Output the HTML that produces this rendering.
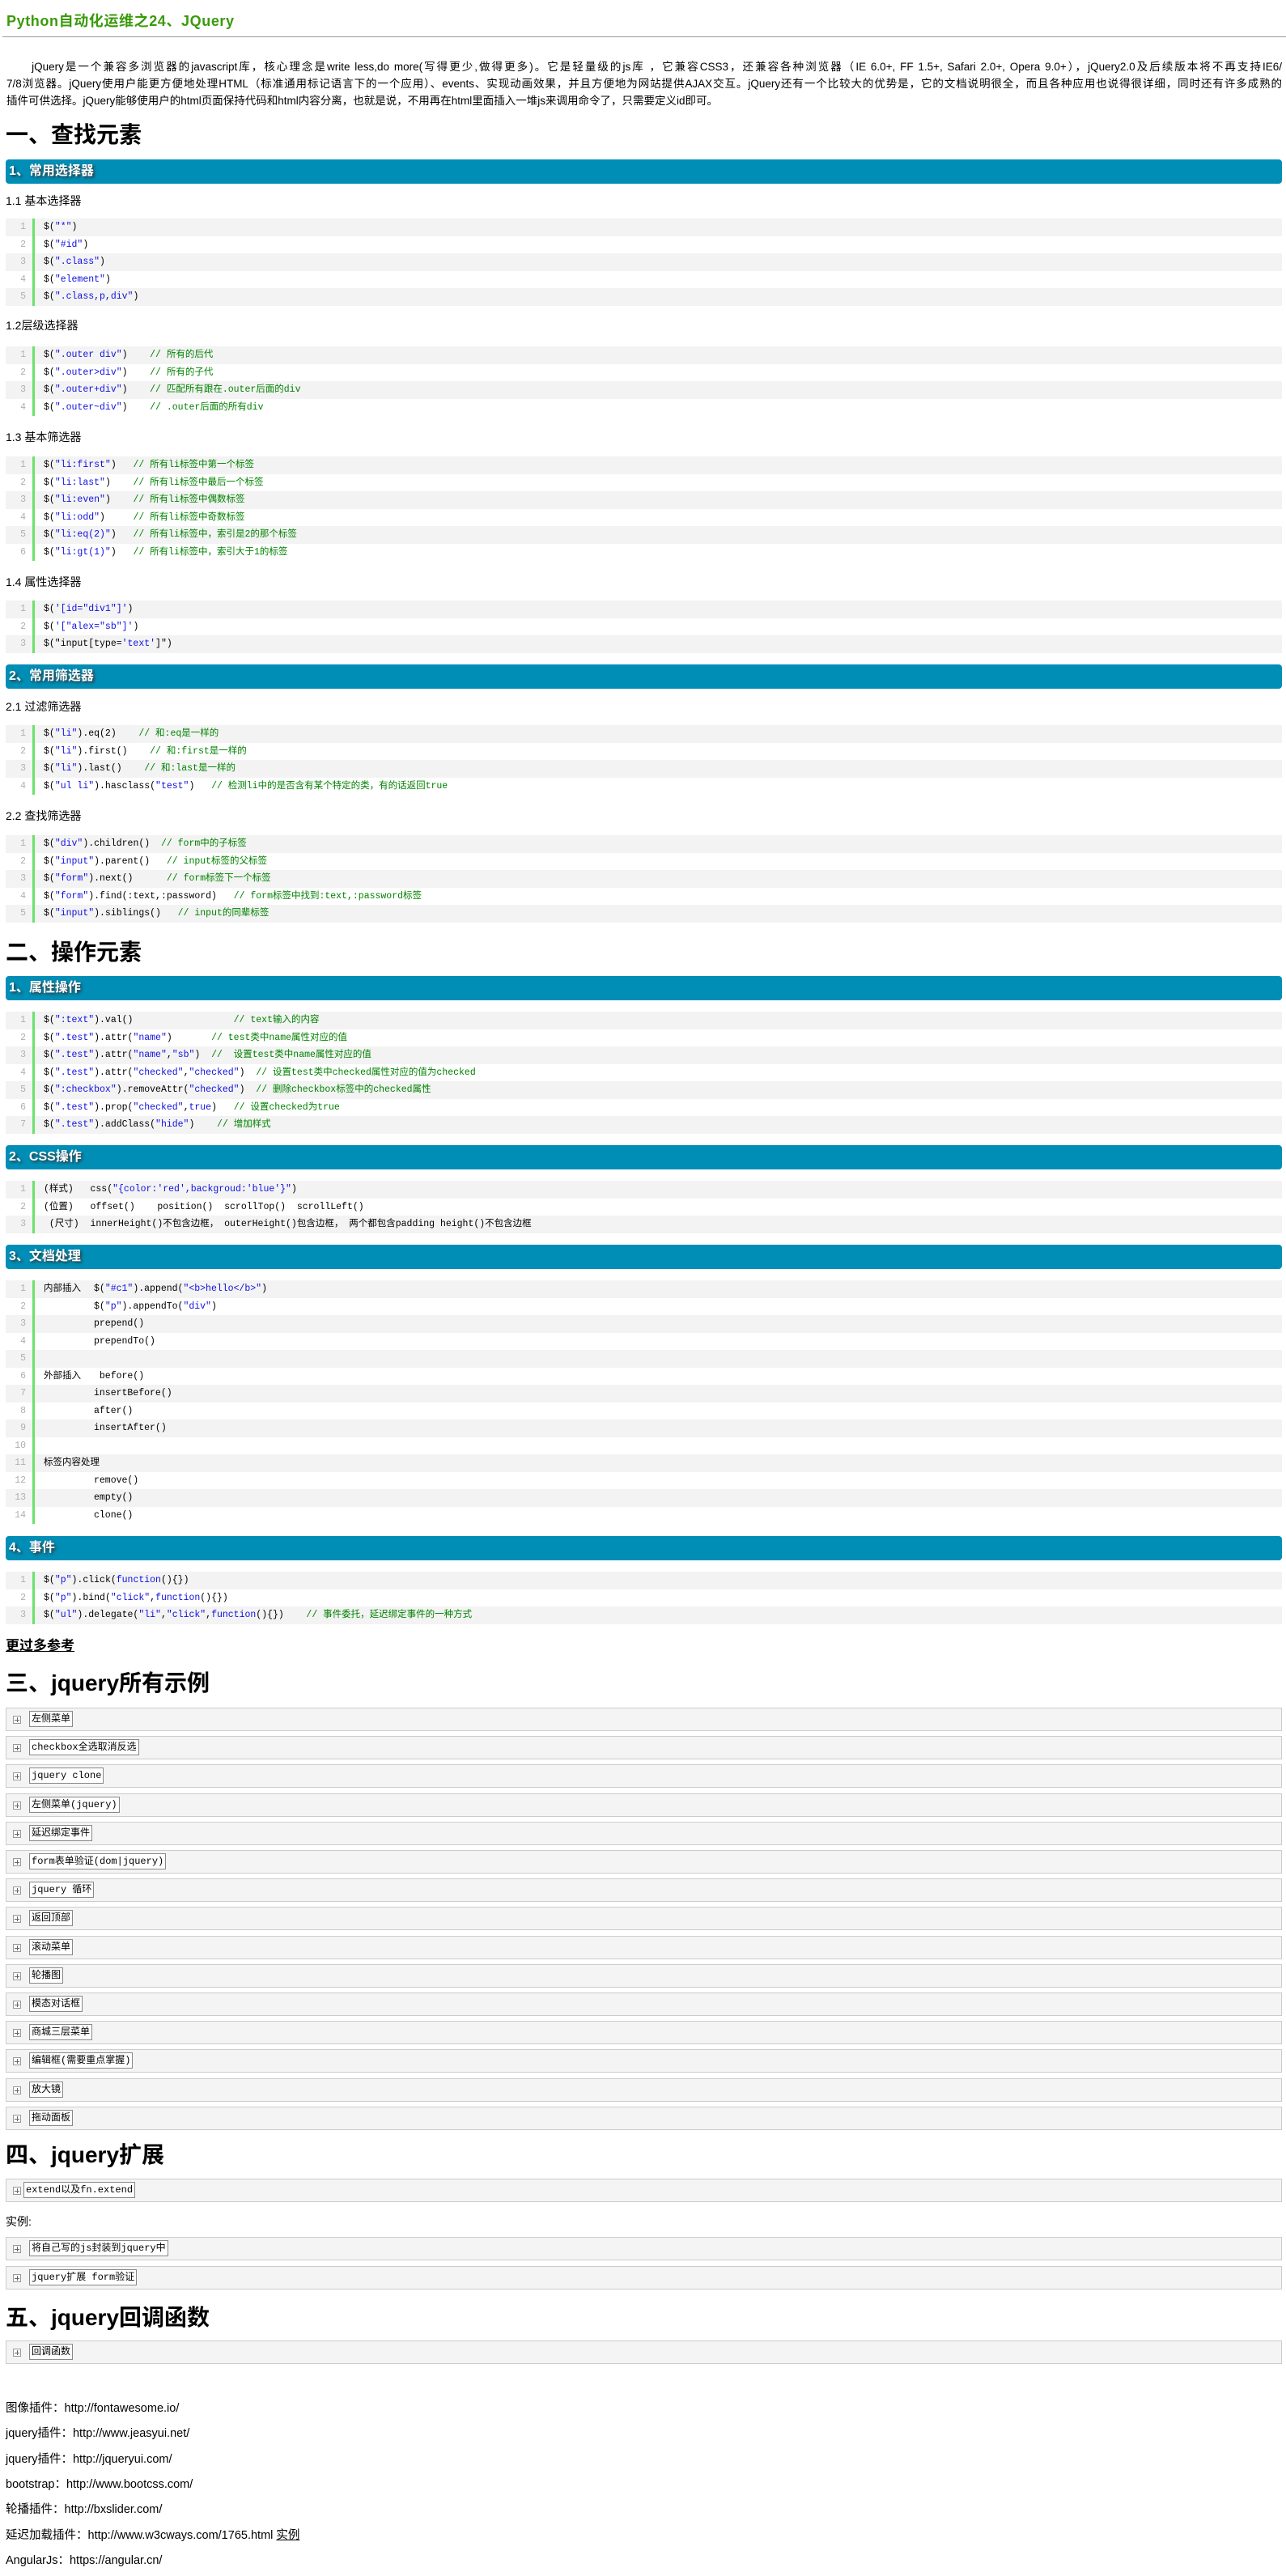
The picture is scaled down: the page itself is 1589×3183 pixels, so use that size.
<!DOCTYPE html>
<html><head><meta charset="utf-8">
<style>
*{margin:0;padding:0;box-sizing:border-box}
html,body{width:1589px;height:3183px;background:#fff;overflow:hidden}
body{position:relative;font-family:"Liberation Sans","Noto Sans CJK SC",sans-serif;color:#000}
.a{position:absolute}
.title{left:8px;top:14px;font-size:18px;font-weight:bold;color:#3a9a0a;letter-spacing:0.6px;line-height:24px}
.rule{left:3px;right:0;top:45px;height:1px;background:#999}
.p{left:8px;width:1576px;top:72px;font-size:13.5px;line-height:21px}
.p div{text-align:justify;text-align-last:justify;white-space:nowrap;overflow:visible}
.p div.l{text-align-last:left}
.h1{left:7px;font-size:28px;font-weight:bold;line-height:34px}
.bar{left:7px;right:5px;height:30px;background:#008eb6;border-radius:4px;color:#fff;font-weight:bold;font-size:16px;line-height:30px;padding-left:4px;text-shadow:2px 2px 3px #333}
.lab{left:7px;font-size:14px;line-height:20px}
.code{left:7px;right:5px;font:11.5px/21.5px "Liberation Mono","Noto Sans CJK SC",monospace}
.code .g{position:absolute;left:33px;top:0;bottom:0;width:3px;background:#6ce26c}
.row{height:21.5px;display:flex;white-space:pre}
.row:nth-child(even){background:#f3f3f3}
.n{width:25px;text-align:right;color:#afafaf}
.t{padding-left:22px}
.s{color:#1010e0}
.c{color:#008200}
.k{display:inline-block;width:62px}
.box{left:7px;right:5px;height:29px;background:#f4f4f4;border:1.5px solid #ccc}
.pl{position:absolute;left:8px;top:9px;width:10px;height:10px;border:1px solid #999;background:#fff}
.pl:before{content:"";position:absolute;left:1px;top:3.5px;width:6px;height:1px;background:#666}
.pl:after{content:"";position:absolute;left:3.5px;top:1px;width:1px;height:6px;background:#666}
.bl{position:absolute;left:28px;top:3px;height:20px;border:1px solid #888;background:#fff;font:12px/18px "Liberation Mono","Noto Sans CJK SC",monospace;padding:0 2px;white-space:pre}
.lk{left:7px;font-size:14.5px;line-height:20px}
</style></head><body>
<div class="a title">Python自动化运维之24、JQuery</div>
<div class="a rule"></div>
<div class="a p">
<div>　　jQuery是一个兼容多浏览器的javascript库，核心理念是write less,do more(写得更少,做得更多)。它是轻量级的js库 ，它兼容CSS3，还兼容各种浏览器（IE 6.0+, FF 1.5+, Safari 2.0+, Opera 9.0+），jQuery2.0及后续版本将不再支持IE6/</div>
<div>7/8浏览器。jQuery使用户能更方便地处理HTML（标准通用标记语言下的一个应用）、events、实现动画效果，并且方便地为网站提供AJAX交互。jQuery还有一个比较大的优势是，它的文档说明很全，而且各种应用也说得很详细，同时还有许多成熟的</div>
<div class="l">插件可供选择。jQuery能够使用户的html页面保持代码和html内容分离，也就是说，不用再在html里面插入一堆js来调用命令了，只需要定义id即可。</div>
</div>

<div class="a h1" style="top:150px">一、查找元素</div>
<div class="a bar" style="top:197px">1、常用选择器</div>
<div class="a lab" style="top:238px">1.1 基本选择器</div>
<div class="a code" style="top:270px"><div class="g"></div>
<div class="row"><span class="n">1</span><span class="t">$(<span class="s">"*"</span>)</span></div>
<div class="row"><span class="n">2</span><span class="t">$(<span class="s">"#id"</span>)</span></div>
<div class="row"><span class="n">3</span><span class="t">$(<span class="s">".class"</span>)</span></div>
<div class="row"><span class="n">4</span><span class="t">$(<span class="s">"element"</span>)</span></div>
<div class="row"><span class="n">5</span><span class="t">$(<span class="s">".class,p,div"</span>)</span></div>
</div>
<div class="a lab" style="top:392px">1.2层级选择器</div>
<div class="a code" style="top:428px"><div class="g"></div>
<div class="row"><span class="n">1</span><span class="t">$(<span class="s">".outer div"</span>)    <span class="c">// 所有的后代</span></span></div>
<div class="row"><span class="n">2</span><span class="t">$(<span class="s">".outer&gt;div"</span>)    <span class="c">// 所有的子代</span></span></div>
<div class="row"><span class="n">3</span><span class="t">$(<span class="s">".outer+div"</span>)    <span class="c">// 匹配所有跟在.outer后面的div</span></span></div>
<div class="row"><span class="n">4</span><span class="t">$(<span class="s">".outer~div"</span>)    <span class="c">// .outer后面的所有div</span></span></div>
</div>
<div class="a lab" style="top:530px">1.3 基本筛选器</div>
<div class="a code" style="top:564px"><div class="g"></div>
<div class="row"><span class="n">1</span><span class="t">$(<span class="s">"li:first"</span>)   <span class="c">// 所有li标签中第一个标签</span></span></div>
<div class="row"><span class="n">2</span><span class="t">$(<span class="s">"li:last"</span>)    <span class="c">// 所有li标签中最后一个标签</span></span></div>
<div class="row"><span class="n">3</span><span class="t">$(<span class="s">"li:even"</span>)    <span class="c">// 所有li标签中偶数标签</span></span></div>
<div class="row"><span class="n">4</span><span class="t">$(<span class="s">"li:odd"</span>)     <span class="c">// 所有li标签中奇数标签</span></span></div>
<div class="row"><span class="n">5</span><span class="t">$(<span class="s">"li:eq(2)"</span>)   <span class="c">// 所有li标签中，索引是2的那个标签</span></span></div>
<div class="row"><span class="n">6</span><span class="t">$(<span class="s">"li:gt(1)"</span>)   <span class="c">// 所有li标签中，索引大于1的标签</span></span></div>
</div>
<div class="a lab" style="top:709px">1.4 属性选择器</div>
<div class="a code" style="top:742px"><div class="g"></div>
<div class="row"><span class="n">1</span><span class="t">$(<span class="s">'[id="div1"]'</span>)</span></div>
<div class="row"><span class="n">2</span><span class="t">$(<span class="s">'["alex="sb"]'</span>)</span></div>
<div class="row"><span class="n">3</span><span class="t">$("input[type=<span class="s">'text'</span>]")</span></div>
</div>

<div class="a bar" style="top:821px">2、常用筛选器</div>
<div class="a lab" style="top:863px">2.1  过滤筛选器</div>
<div class="a code" style="top:896px"><div class="g"></div>
<div class="row"><span class="n">1</span><span class="t">$(<span class="s">"li"</span>).eq(2)    <span class="c">// 和:eq是一样的</span></span></div>
<div class="row"><span class="n">2</span><span class="t">$(<span class="s">"li"</span>).first()    <span class="c">// 和:first是一样的</span></span></div>
<div class="row"><span class="n">3</span><span class="t">$(<span class="s">"li"</span>).last()    <span class="c">// 和:last是一样的</span></span></div>
<div class="row"><span class="n">4</span><span class="t">$(<span class="s">"ul li"</span>).hasclass(<span class="s">"test"</span>)   <span class="c">// 检测li中的是否含有某个特定的类，有的话返回true</span></span></div>
</div>
<div class="a lab" style="top:998px">2.2  查找筛选器</div>
<div class="a code" style="top:1032px"><div class="g"></div>
<div class="row"><span class="n">1</span><span class="t">$(<span class="s">"div"</span>).children()  <span class="c">// form中的子标签</span></span></div>
<div class="row"><span class="n">2</span><span class="t">$(<span class="s">"input"</span>).parent()   <span class="c">// input标签的父标签</span></span></div>
<div class="row"><span class="n">3</span><span class="t">$(<span class="s">"form"</span>).next()      <span class="c">// form标签下一个标签</span></span></div>
<div class="row"><span class="n">4</span><span class="t">$(<span class="s">"form"</span>).find(:text,:password)   <span class="c">// form标签中找到:text,:password标签</span></span></div>
<div class="row"><span class="n">5</span><span class="t">$(<span class="s">"input"</span>).siblings()   <span class="c">// input的同辈标签</span></span></div>
</div>

<div class="a h1" style="top:1160px">二、操作元素</div>
<div class="a bar" style="top:1206px">1、属性操作</div>
<div class="a code" style="top:1250px"><div class="g"></div>
<div class="row"><span class="n">1</span><span class="t">$(<span class="s">":text"</span>).val()                  <span class="c">// text输入的内容</span></span></div>
<div class="row"><span class="n">2</span><span class="t">$(<span class="s">".test"</span>).attr(<span class="s">"name"</span>)       <span class="c">// test类中name属性对应的值</span></span></div>
<div class="row"><span class="n">3</span><span class="t">$(<span class="s">".test"</span>).attr(<span class="s">"name"</span>,<span class="s">"sb"</span>)  <span class="c">//  设置test类中name属性对应的值</span></span></div>
<div class="row"><span class="n">4</span><span class="t">$(<span class="s">".test"</span>).attr(<span class="s">"checked"</span>,<span class="s">"checked"</span>)  <span class="c">// 设置test类中checked属性对应的值为checked</span></span></div>
<div class="row"><span class="n">5</span><span class="t">$(<span class="s">":checkbox"</span>).removeAttr(<span class="s">"checked"</span>)  <span class="c">// 删除checkbox标签中的checked属性</span></span></div>
<div class="row"><span class="n">6</span><span class="t">$(<span class="s">".test"</span>).prop(<span class="s">"checked"</span>,<span class="s">true</span>)   <span class="c">// 设置checked为true</span></span></div>
<div class="row"><span class="n">7</span><span class="t">$(<span class="s">".test"</span>).addClass(<span class="s">"hide"</span>)    <span class="c">// 增加样式</span></span></div>
</div>
<div class="a bar" style="top:1415px">2、CSS操作</div>
<div class="a code" style="top:1459px"><div class="g"></div>
<div class="row"><span class="n">1</span><span class="t">(样式)   css(<span class="s">"{color:'red',backgroud:'blue'}"</span>)</span></div>
<div class="row"><span class="n">2</span><span class="t">(位置)   offset()    position()  scrollTop()  scrollLeft()</span></div>
<div class="row"><span class="n">3</span><span class="t"> (尺寸)  innerHeight()不包含边框， outerHeight()包含边框， 两个都包含padding height()不包含边框</span></div>
</div>
<div class="a bar" style="top:1538px">3、文档处理</div>
<div class="a code" style="top:1582px"><div class="g"></div>
<div class="row"><span class="n">1</span><span class="t"><span class="k">内部插入</span>$(<span class="s">"#c1"</span>).append(<span class="s">"&lt;b&gt;hello&lt;/b&gt;"</span>)</span></div>
<div class="row"><span class="n">2</span><span class="t"><span class="k"></span>$(<span class="s">"p"</span>).appendTo(<span class="s">"div"</span>)</span></div>
<div class="row"><span class="n">3</span><span class="t"><span class="k"></span>prepend()</span></div>
<div class="row"><span class="n">4</span><span class="t"><span class="k"></span>prependTo()</span></div>
<div class="row"><span class="n">5</span><span class="t"> </span></div>
<div class="row"><span class="n">6</span><span class="t"><span class="k">外部插入</span> before()</span></div>
<div class="row"><span class="n">7</span><span class="t"><span class="k"></span>insertBefore()</span></div>
<div class="row"><span class="n">8</span><span class="t"><span class="k"></span>after()</span></div>
<div class="row"><span class="n">9</span><span class="t"><span class="k"></span>insertAfter()</span></div>
<div class="row"><span class="n">10</span><span class="t"> </span></div>
<div class="row"><span class="n">11</span><span class="t">标签内容处理</span></div>
<div class="row"><span class="n">12</span><span class="t"><span class="k"></span>remove()</span></div>
<div class="row"><span class="n">13</span><span class="t"><span class="k"></span>empty()</span></div>
<div class="row"><span class="n">14</span><span class="t"><span class="k"></span>clone()</span></div>
</div>
<div class="a bar" style="top:1898px">4、事件</div>
<div class="a code" style="top:1942px"><div class="g"></div>
<div class="row"><span class="n">1</span><span class="t">$(<span class="s">"p"</span>).click(<span class="s">function</span>(){})</span></div>
<div class="row"><span class="n">2</span><span class="t">$(<span class="s">"p"</span>).bind(<span class="s">"click"</span>,<span class="s">function</span>(){})</span></div>
<div class="row"><span class="n">3</span><span class="t">$(<span class="s">"ul"</span>).delegate(<span class="s">"li"</span>,<span class="s">"click"</span>,<span class="s">function</span>(){})    <span class="c">// 事件委托，延迟绑定事件的一种方式</span></span></div>
</div>

<div class="a" style="left:7px;top:2022px;font-size:17px;font-weight:bold;line-height:24px;text-decoration:underline">更过多参考</div>
<div class="a h1" style="top:2063px">三、jquery所有示例</div>
<div class="a box" style="top:2110px"><i class="pl"></i><span class="bl">左侧菜单</span></div>
<div class="a box" style="top:2145px"><i class="pl"></i><span class="bl">checkbox全选取消反选</span></div>
<div class="a box" style="top:2180px"><i class="pl"></i><span class="bl">jquery clone</span></div>
<div class="a box" style="top:2216px"><i class="pl"></i><span class="bl">左侧菜单(jquery)</span></div>
<div class="a box" style="top:2251px"><i class="pl"></i><span class="bl">延迟绑定事件</span></div>
<div class="a box" style="top:2286px"><i class="pl"></i><span class="bl">form表单验证(dom|jquery)</span></div>
<div class="a box" style="top:2321px"><i class="pl"></i><span class="bl">jquery 循环</span></div>
<div class="a box" style="top:2356px"><i class="pl"></i><span class="bl">返回顶部</span></div>
<div class="a box" style="top:2392px"><i class="pl"></i><span class="bl">滚动菜单</span></div>
<div class="a box" style="top:2427px"><i class="pl"></i><span class="bl">轮播图</span></div>
<div class="a box" style="top:2462px"><i class="pl"></i><span class="bl">模态对话框</span></div>
<div class="a box" style="top:2497px"><i class="pl"></i><span class="bl">商城三层菜单</span></div>
<div class="a box" style="top:2532px"><i class="pl"></i><span class="bl">编辑框(需要重点掌握)</span></div>
<div class="a box" style="top:2568px"><i class="pl"></i><span class="bl">放大镜</span></div>
<div class="a box" style="top:2603px"><i class="pl"></i><span class="bl">拖动面板</span></div>

<div class="a h1" style="top:2646px">四、jquery扩展</div>
<div class="a box" style="top:2692px"><i class="pl"></i><span class="bl" style="left:21px">extend以及fn.extend</span></div>
<div class="a lab" style="top:2735px">实例:</div>
<div class="a box" style="top:2764px"><i class="pl"></i><span class="bl">将自己写的js封装到jquery中</span></div>
<div class="a box" style="top:2800px"><i class="pl"></i><span class="bl">jquery扩展 form验证</span></div>
<div class="a h1" style="top:2847px">五、jquery回调函数</div>
<div class="a box" style="top:2892px"><i class="pl"></i><span class="bl">回调函数</span></div>

<div class="a lk" style="top:2966px">图像插件：http://fontawesome.io/</div>
<div class="a lk" style="top:2997px">jquery插件：http://www.jeasyui.net/</div>
<div class="a lk" style="top:3029px">jquery插件：http://jqueryui.com/</div>
<div class="a lk" style="top:3060px">bootstrap：http://www.bootcss.com/</div>
<div class="a lk" style="top:3091px">轮播插件：http://bxslider.com/</div>
<div class="a lk" style="top:3123px">延迟加载插件：http://www.w3cways.com/1765.html  <u>实例</u></div>
<div class="a lk" style="top:3154px">AngularJs：https://angular.cn/</div>
</body></html>
